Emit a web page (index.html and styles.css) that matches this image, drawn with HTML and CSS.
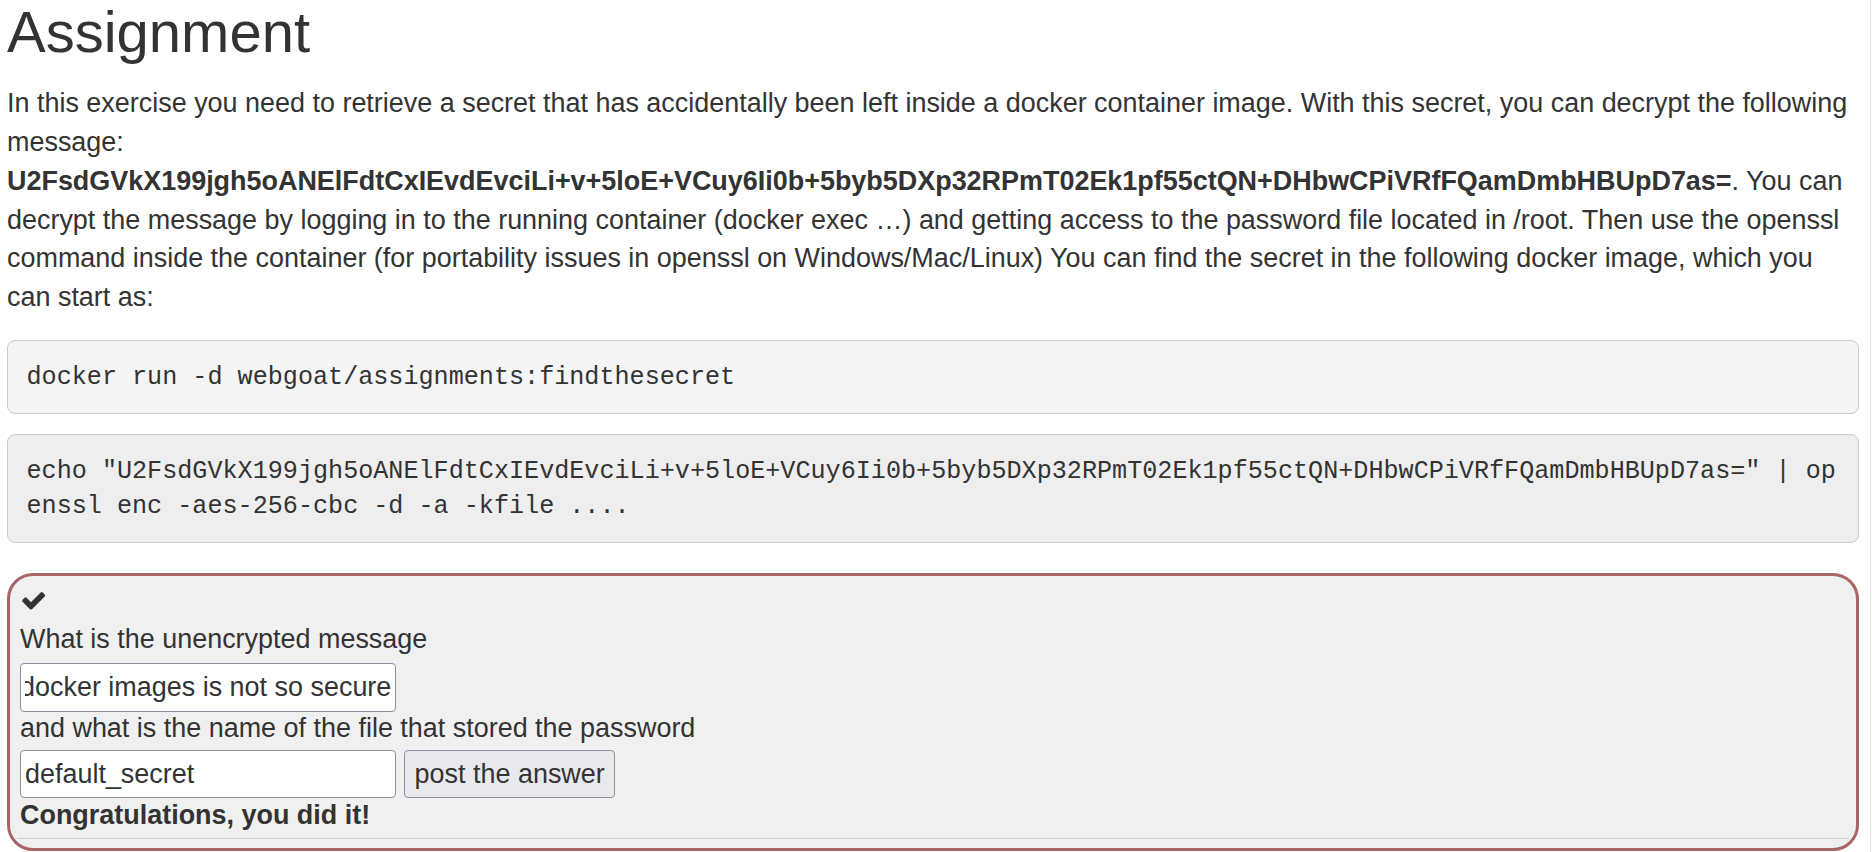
FILE: index.html
```html
<!DOCTYPE html>
<html lang="en">
<head>
<meta charset="utf-8">
<title>Assignment</title>
<link rel="stylesheet" href="styles.css">
</head>
<body>
<div class="page">
  <h1 class="title">Assignment</h1>
  <p class="intro">In this exercise you need to retrieve a secret that has accidentally been left inside a docker container image. With this secret, you can decrypt the following message: <b class="secret">U2FsdGVkX199jgh5oANElFdtCxIEvdEvciLi+v+5loE+VCuy6Ii0b+5byb5DXp32RPmT02Ek1pf55ctQN+DHbwCPiVRfFQamDmbHBUpD7as=</b>. You can decrypt the message by logging in to the running container (docker exec &hellip;) and getting access to the password file located in /root. Then use the openssl command inside the container (for portability issues in openssl on Windows/Mac/Linux) You can find the secret in the following docker image, which you can start as:</p>
  <pre class="code code-light">docker run -d webgoat/assignments:findthesecret</pre>
  <pre class="code code-dark">echo "U2FsdGVkX199jgh5oANElFdtCxIEvdEvciLi+v+5loE+VCuy6Ii0b+5byb5DXp32RPmT02Ek1pf55ctQN+DHbwCPiVRfFQamDmbHBUpD7as=" | openssl enc -aes-256-cbc -d -a -kfile ....</pre>
  <div class="attack-container">
    <div class="feedback-icon">
      <svg viewBox="121 334 1550 1188" aria-hidden="true"><path d="M1671 566q0 40-28 68l-724 724-136 136q-28 28-68 28t-68-28l-136-136-362-362q-28-28-28-68t28-68l136-136q28-28 68-28t68 28l294 295 656-657q28-28 68-28t68 28l136 136q28 28 28 68z"/></svg>
    </div>
    <form class="attack-form">
      <div class="label">What is the unencrypted message</div>
      <input class="field field-first" type="text" id="msg" value="docker images is not so secure">
      <div class="label label-second">and what is the name of the file that stored the password</div>
      <div class="row">
        <input class="field" type="text" value="default_secret">
        <button type="button" class="btn">post the answer</button>
      </div>
      <div class="feedback">Congratulations, you did it!</div>
    </form>
    <hr class="sep">
  </div>
</div>
<script src="script.js"></script>
</body>
</html>
```

FILE: styles.css
```css
html, body {
  margin: 0;
  padding: 0;
  background: #fff;
}

body {
  font-family: "Liberation Sans", Arial, sans-serif;
  font-size: 26.95px;
  line-height: 38.8px;
  color: #333;
}

.page {
  box-sizing: border-box;
  width: 1871px;
  min-height: 852px;
  padding: 0 11px 0 7px;
  border-right: 1px solid #dedede;
}

.title {
  margin: 0 0 20.5px;
  font-size: 58px;
  font-weight: 400;
  line-height: 63.8px;
}

.intro {
  margin: 0 0 23px;
}

.secret {
  font-weight: 700;
}

.code {
  margin: 0 0 20px;
  padding: 18.5px;
  border: 1px solid #ccc;
  border-radius: 8px;
  font-family: "Liberation Mono", "Courier New", monospace;
  font-size: 25.13px;
  line-height: 35px;
  color: #333;
  white-space: pre-wrap;
  word-break: break-all;
}

.code-light {
  background: #f5f5f5;
}

.code-dark {
  background: #eee;
}

.attack-container {
  margin-top: 30px;
  border: 3px solid #a96565;
  border-radius: 26px;
  background: #f0f0f0;
  padding: 16px 10px 9px;
}

.feedback-icon svg {
  display: block;
  width: 23.3px;
  height: 17.6px;
  margin-left: 1.7px;
  fill: #333;
}

.attack-form {
  margin: 14.8px 0 0;
  line-height: 31px;
}

.field {
  display: block;
  box-sizing: border-box;
  width: 376px;
  height: 48.5px;
  margin: 8px 0 0;
  padding: 0 4px;
  border: 1px solid #8f8f9d;
  border-radius: 4px;
  background: #fff;
  font: inherit;
  color: #333;
}

.label-second {
  margin-top: 1.4px;
}

.row {
  display: flex;
  gap: 8.1px;
  margin-top: 6px;
  height: 48px;
}

.row .field {
  margin: 0;
  height: 48px;
}

.btn {
  box-sizing: border-box;
  height: 48px;
  padding: 0 9.5px;
  border: 1px solid #8f8f9d;
  border-radius: 4px;
  background: #e9e9ed;
  font: inherit;
  color: #333;
}

.feedback {
  margin-top: 1.4px;
  font-weight: 700;
}

.sep {
  height: 0;
  margin: 7.3px -3px 0;
  border: 0;
  border-top: 1px solid #d0d0d0;
}
```

FILE: script.js
```js
(function () {
  function scrollEnd() {
    var f = document.getElementById('msg');
    if (f) {
      f.scrollLeft = f.scrollWidth;
    }
  }
  scrollEnd();
  window.addEventListener('load', scrollEnd);
})();
```
